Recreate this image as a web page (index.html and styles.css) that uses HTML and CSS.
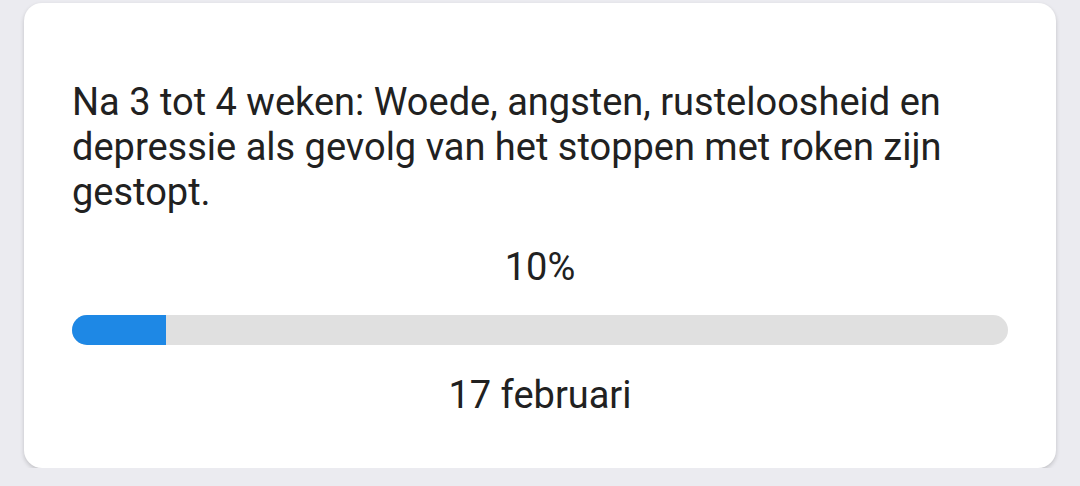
FILE: index.html
```html
<!DOCTYPE html>
<html lang="nl">
<head>
    <meta charset="UTF-8">
    <meta name="viewport" content="width=device-width, initial-scale=1.0">
    <title>Mijlpaal</title>
    <link rel="stylesheet" href="styles.css">
</head>
<body>
    <!-- Milestone card -->
    <div class="card">
        <p class="milestone-text">Na 3 tot 4 weken: Woede, angsten, rusteloosheid en depressie als gevolg van het stoppen met roken zijn gestopt.</p>

        <div class="percent">10%</div>

        <div class="progress">
            <div class="progress-fill" style="width: 10%;"></div>
        </div>

        <div class="date">17 februari</div>
    </div>
</body>
</html>
```

FILE: styles.css
```css
/* General body styling */
body {
    font-family: Roboto, "Liberation Sans", sans-serif;
    background-color: #ebebf0;
    margin: 0;
    padding: 3px 24px 0 24px;
    color: #212121;
}

/* Card */
.card {
    background-color: #fff;
    border-radius: 18px;
    box-shadow: 0 2px 4px rgba(0, 0, 0, 0.18);
    padding: 77px 48px 0 48px;
    height: 465px;
    box-sizing: border-box;
}

.milestone-text {
    margin: 0;
    font-size: 38px;
    line-height: 45px;
}

.percent {
    margin-top: 30px;
    text-align: center;
    font-size: 38px;
    line-height: 45px;
}

/* Progress bar */
.progress {
    margin-top: 25px;
    height: 30px;
    background-color: #e0e0e0;
    border-radius: 15px;
    overflow: hidden;
}

.progress-fill {
    height: 100%;
    background-color: #1e88e5;
}

.date {
    margin-top: 28px;
    text-align: center;
    font-size: 38px;
    line-height: 45px;
}
```
